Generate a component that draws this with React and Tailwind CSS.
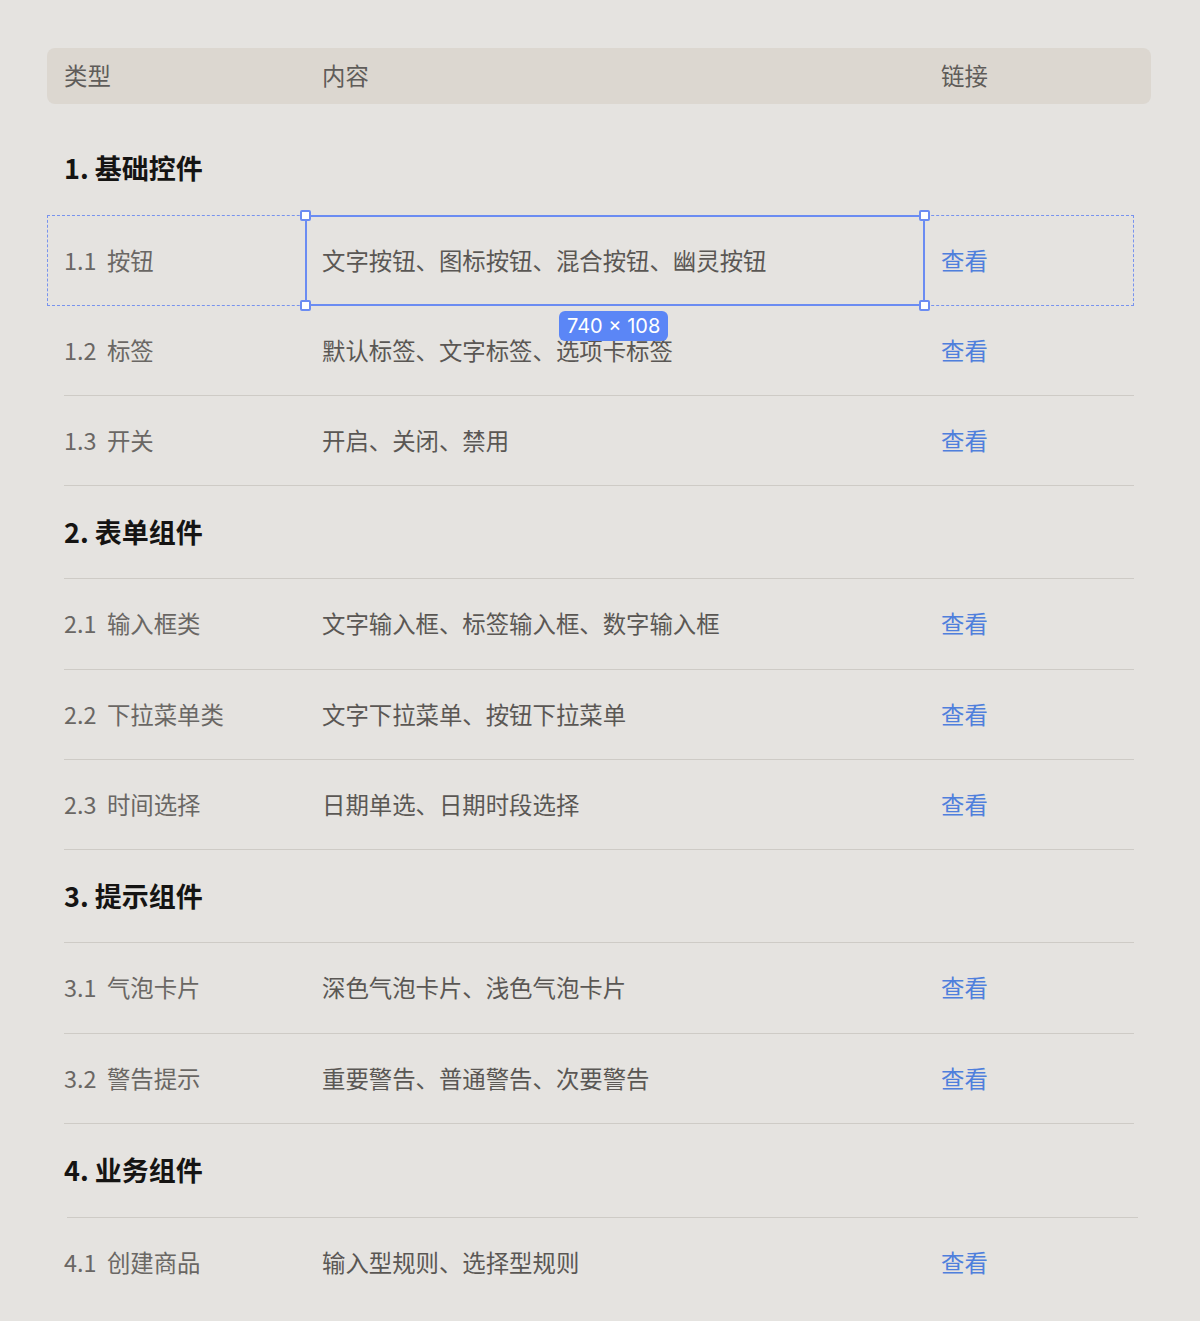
import React from "react";

const sections = [
    {
        title: "1. 基础控件",
        rows: [
            { type: "1.1  按钮", content: "文字按钮、图标按钮、混合按钮、幽灵按钮", selected: true },
            { type: "1.2  标签", content: "默认标签、文字标签、选项卡标签" },
            { type: "1.3  开关", content: "开启、关闭、禁用" },
        ],
    },
    {
        title: "2. 表单组件",
        rows: [
            { type: "2.1  输入框类", content: "文字输入框、标签输入框、数字输入框" },
            { type: "2.2  下拉菜单类", content: "文字下拉菜单、按钮下拉菜单" },
            { type: "2.3  时间选择", content: "日期单选、日期时段选择" },
        ],
    },
    {
        title: "3. 提示组件",
        rows: [
            { type: "3.1  气泡卡片", content: "深色气泡卡片、浅色气泡卡片" },
            { type: "3.2  警告提示", content: "重要警告、普通警告、次要警告" },
        ],
    },
    {
        title: "4. 业务组件",
        rows: [{ type: "4.1  创建商品", content: "输入型规则、选择型规则", last: true }],
    },
];

const Handle = ({ className }) => (
    <div className={`absolute w-[11px] h-[11px] bg-white border-2 border-[#6b8cf2] rounded-[2px] ${className}`} />
);

const Row = ({ row }) => (
    <div className="relative pl-[17px]">
        <div
            className={`flex items-center h-[90.4px] ${row.selected || row.last ? "" : "border-b border-[#cecbc6]"}`}
        >
            <div className="w-[241px] text-[#6a6764] whitespace-pre">{row.type}</div>
            <div className="w-[619px] pl-[17px] text-[#5a5754]">{row.content}</div>
            <div className="flex-1 pl-[17px]">
                <a href="#" className="text-[#4f7fdc]">查看</a>
            </div>
        </div>

        {/* selection overlay */}
        {row.selected && (
            <>
                <div className="absolute left-0 top-0 w-[1087px] h-[91px] border border-dashed border-[#7893ee]" />
                <div className="absolute left-[258px] top-0 w-[620px] h-[91px] border-2 border-[#6b8cf2]" />
                <Handle className="left-[253px] -top-[5px]" />
                <Handle className="left-[872px] -top-[5px]" />
                <Handle className="left-[253px] top-[85px]" />
                <Handle className="left-[872px] top-[85px]" />
                <div className="absolute left-[512px] top-[96px] h-[30px] px-[8px] flex items-center rounded-[6px] bg-[#5b86f6] text-white text-[20px] font-['Inter',sans-serif] z-10">
                    740 × 108
                </div>
            </>
        )}
    </div>
);

const App = () => {
    return (
        <div className="min-h-[1321px] bg-[#e5e3e0] pt-[48px] pl-[47px] font-['Noto_Sans_CJK_SC','Noto_Sans',sans-serif] text-[23.4px]">
            <div className="w-[1104px]">
                {/* HEADER */}
                <div className="flex items-center h-[56px] px-[17px] rounded-[8px] bg-[#dcd7d0] text-[#5f5c59] leading-none pb-[1px]">
                    <div className="w-[258px]">类型</div>
                    <div className="w-[619px]">内容</div>
                    <div className="flex-1">链接</div>
                </div>

                <div className="w-[1087px] mt-[18px]">
                    {sections.map((section, i) => (
                        <div key={section.title}>
                            <div className="pl-[17px]">
                                <div
                                    className={`flex items-center text-[27px] font-bold text-[#151413] ${
                                        i === 0 ? "" : "border-b border-[#cecbc6]"
                                    } ${i === 3 ? "h-[93.5px] ml-[3px] mr-[-4px]" : "h-[93px]"}`}
                                >
                                    <span className={i === 3 ? "-ml-[3px]" : ""}>{section.title}</span>
                                </div>
                            </div>
                            {section.rows.map((row) => (
                                <Row key={row.type} row={row} />
                            ))}
                        </div>
                    ))}
                </div>
            </div>
        </div>
    );
};

export default App;
